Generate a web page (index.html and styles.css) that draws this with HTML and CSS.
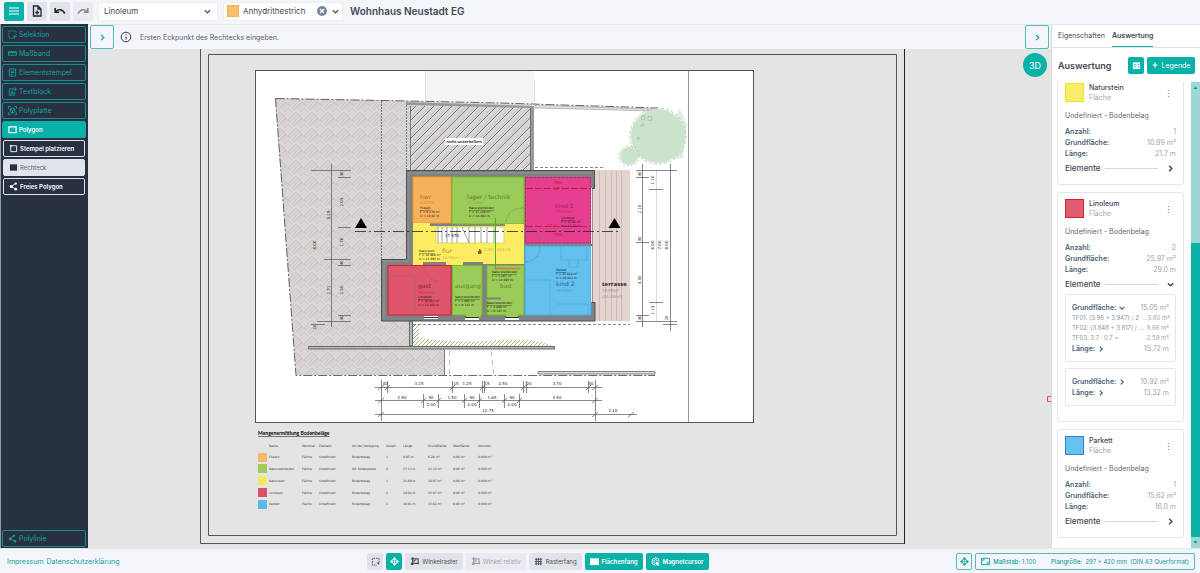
FILE: index.html
```html
<!doctype html>
<html lang="de">
    <head>
        <meta charset="utf-8">
        <meta name="viewport" content="width=device-width, initial-scale=1">
        <title>Wohnhaus Neustadt EG</title>
        <link rel="stylesheet" href="styles.css">
    </head>
    <body>
        <header class="topbar">
            <button class="tool is-primary" aria-label="Menü"><svg class="icon-lg" viewBox="0 0 12 12"><path d="M1 3h10M1 6h10M1 9h10"/></svg></button>
            <button class="tool" aria-label="Neu"><svg class="icon-lg" viewBox="0 0 12 12"><path d="M2.500 1h4.500l3 3v7h-7.500zM7 1v3h3M6.200 5.500v4M4.200 7.500h4" stroke-width="1.300"/></svg></button>
            <button class="tool" aria-label="Rückgängig"><svg class="icon-lg" viewBox="0 0 12 12"><path d="M1.200 3v4.200h4M1.500 7c2-3 7-3.500 9.300 1.500" stroke-width="1.600"/></svg></button>
            <button class="tool is-faded" aria-label="Wiederholen"><svg class="icon-lg" viewBox="0 0 12 12"><path d="M10.800 3v4.200h-4M10.500 7c-2-3-7-3.500-9.300 1.500" stroke-width="1.600"/></svg></button>
            <div class="field">
                <select aria-label="Belag"><option>Linoleum</option></select>
                <svg class="icon" viewBox="0 0 10 10"><path d="M2 3.500l3 3 3-3" stroke-width="1.400"/></svg>
            </div>
            <div class="field has-swatch">
                <span class="swatch-sm"></span>
                <select aria-label="Material"><option>Anhydrithestrich</option></select>
                <button class="clear" aria-label="Leeren"><svg viewBox="0 0 10 10"><path d="M3 3l4 4M7 3l-4 4" stroke-width="1.200"/></svg></button>
                <svg class="icon" viewBox="0 0 10 10"><path d="M2 3.500l3 3 3-3" stroke-width="1.400"/></svg>
            </div>
            <h1 class="title">Wohnhaus Neustadt EG</h1>
        </header>
        <div class="main">
            <nav class="sidebar">
                <button class="nav-item"><svg class="icon" viewBox="0 0 10 10"><path d="M9 6V1H1v8h5" stroke-dasharray="2 1"/><path class="solid" d="M6 6l4 1-2 1-1 2z"/></svg>Selektion</button>
                <button class="nav-item"><svg class="icon" viewBox="0 0 10 10"><path d="M.5 3h9v4h-9zM.5 4h9M2.500 3v2M5 3v2M7.500 3v2"/></svg>Maßband</button>
                <button class="nav-item"><svg class="icon" viewBox="0 0 10 10"><path d="M1.500 1h7v8h-7zM3 3.500h4M3 5h4M3 7h2.500"/></svg>Elementstempel</button>
                <button class="nav-item"><svg class="icon" viewBox="0 0 10 10"><path d="M6 2H1.500v7h6V5M3 4.500h3M3 6h3M3 7.500h3M8 .5v4M6 2.500h4"/></svg>Textblock</button>
                <button class="nav-item"><svg class="icon" viewBox="0 0 10 10"><path d="M.5 3V.5H3M7 .5h2.500V3M9.500 7v2.500H7M3 9.500H.5V7M5 2l2.700 1.500v3L5 8 2.300 6.500v-3zM2.300 3.500L5 5l2.700-1.500M5 5v3"/></svg>Polyplatte</button>
                <button class="nav-item is-active"><svg class="icon" viewBox="0 0 10 10"><path d="M1 2h8v6.500H1z" stroke-width="1.400"/></svg>Polygon</button>
                <button class="nav-item is-sub"><svg class="icon" viewBox="0 0 10 10"><path d="M2 2h6.500v6.500H2zM1 2h2M2 1v2"/></svg>Stempel platzieren</button>
                <button class="nav-item is-sub is-selected"><svg class="icon" viewBox="0 0 10 10"><path class="solid" d="M1 1.500h8v7H1z"/></svg>Rechteck</button>
                <button class="nav-item is-sub"><svg class="icon" viewBox="0 0 10 10"><path d="M7.500 1.500L2.500 5l5 3"/><circle class="solid" cx="2.500" cy="5" r="1.800"/><circle class="solid" cx="7.500" cy="1.800" r="1.300"/><circle class="solid" cx="7.500" cy="8" r="1.500"/></svg>Freies Polygon</button>
                <button class="nav-item is-last"><svg class="icon" viewBox="0 0 10 10"><path d="M7 1.500L2.500 5l5 3"/><circle class="solid" cx="2.500" cy="5.500" r="1.600"/><circle class="solid" cx="6.500" cy="2" r="1.200"/><circle class="solid" cx="7.800" cy="8" r="1.400"/></svg>Polylinie</button>
            </nav>
            <main class="workspace">
                <div class="hint">
                    <button class="toggle" aria-label="Werkzeuge"><svg class="icon" viewBox="0 0 10 10"><path d="M3.500 2l3 3-3 3" stroke-width="1.300"/></svg></button>
                    <svg class="info" viewBox="0 0 12 12"><circle cx="6" cy="6" r="4.800"/><path d="M6 5.500v3M6 3.200v1.100"/></svg>
                    <span>Ersten Eckpunkt des Rechtecks eingeben.</span>
                    <button class="toggle is-right" aria-label="Seitenleiste"><svg class="icon" viewBox="0 0 10 10"><path d="M3.500 2l3 3-3 3" stroke-width="1.300"/></svg></button>
                </div>
                <div class="stage">
                    <svg class="plan" viewBox="88 49 963 499" role="img" aria-label="Grundriss Erdgeschoss">
                        <defs>
                            <pattern id="paving" width="16" height="16" patternUnits="userSpaceOnUse">
                                <path d="M0 8l8-8M2 10l8-8M4 12l8-8M6 14l8-8M8 0l8 8M-2 6l4 4M0 12l4 4M10 8l6 6M8 10l6 6M12 6l4 4" stroke="#c3bebd" stroke-width=".6" fill="none"/>
                            </pattern>
                            <pattern id="diagonal" width="9" height="9" patternUnits="userSpaceOnUse">
                                <path d="M-1 10L10-1M-1 1l2-2M8 10l2-2" stroke="#555" stroke-width=".7"/>
                                <path d="M-1 7L7-1M6 10l4-4" stroke="#aaa" stroke-width=".5"/>
                            </pattern>
                            <pattern id="hedge" width="4" height="4" patternUnits="userSpaceOnUse">
                                <path d="M0 4l4-4" stroke="#9cb86c" stroke-width="1"/>
                            </pattern>
                        </defs>

                        <!-- sheet frames -->
                        <path class="frame" d="M200.500 49V543.500H904.500M208.500 54.500H896.500V535.500H208.500z"/>
                        <path d="M904.500 49V544" stroke="#222"/>
                        <rect class="sheet" x="255.500" y="70.500" width="498" height="352"/>
                        <path d="M688.500 71V422" stroke="#999"/>

                        <!-- site -->
                        <path d="M425 71H534L535 104 425 101z" fill="#f4f4f4"/>
                        <path d="M425.500 71V101M534.500 80V102" stroke="#ddd"/>
                        <g id="terrain">
                            <path d="M275 98L532 104V171H406V260H381V321H409L412 349H445V375H296z" fill="#d9d5d4"/>
                            <path d="M275 98L410 101V171H406V260H381V321H409L412 349H445V375H296z" fill="url(#paving)"/>
                            <path d="M410 106H531V171H410z" fill="url(#diagonal)"/>
                        </g>
                        <path d="M406 102L534 106V170H530V108L406 105z" fill="#999"/>
                        <path d="M530.500 108V170M410.500 106V170M444.500 350V375" stroke="#666" stroke-width=".8"/>
                        <path d="M535 105L655 109V111L535 108z" fill="#ddd" stroke="#888" stroke-width=".5"/>
                        <path d="M275.500 98.500L410 101 500 103 658 108M275.500 98.500L296 375.500H655" stroke="#444" stroke-width=".8" stroke-dasharray="9 2 2 2" fill="none"/>
                        <path d="M381.500 101V259M406.500 105V170" stroke="#777" stroke-dasharray="2 1"/>
                        <path d="M535 167.500H603M413 324.500H630" stroke="#888" stroke-dasharray="3 2"/>
                        <rect x="445" y="138" width="38" height="7" fill="#fff"/>
                        <text class="site-note" x="464" y="143">nicht unterkellert</text>
                        <path d="M412 325H419V338Q465 344 495 340 535 338 553 346H412z" fill="url(#hedge)"/>
                        <path d="M308.500 346.500H554.500V349H308.500zM409.500 321H412.500V346H409.500z" fill="#b4b8b8" stroke="#666"/>
                        <path d="M538 371.500H655V374H538z" fill="#ddd" stroke="#666" stroke-width=".8"/>
                        <path d="M449.500 351V375M491 351L494 375" stroke="#bbb" stroke-dasharray="5 4"/>

                        <!-- trees -->
                        <g fill="#cbe2cb" stroke="#a9bba9" stroke-width=".8">
                            <path d="M679 108L687 124 683 158 665 160z" stroke="none" opacity=".6"/>
                            <circle cx="658" cy="136" r="27" stroke="none"/>
                            <circle cx="658" cy="136" r="28" fill="none" stroke-dasharray="3 2"/>
                            <circle cx="629" cy="156" r="9" stroke="none"/>
                            <circle cx="629" cy="156" r="10" fill="none" stroke-dasharray="2 2"/>
                            <path d="M641 117l3-2 1 4-3 1zM648 116l4 1-1 4-3-1zM640 126l3-3 1 3zM637 137l3 1-2 2z" fill="none"/>
                        </g>

                        <!-- terrace -->
                        <path d="M592 170H630V321H592z" fill="#e4d3cf"/>
                        <path d="M599.500 171V321M605.500 171V321M611.500 171V321M616.500 171V321M621.500 171V321" stroke="#c0afab" stroke-width=".7"/>

                        <!-- walls and rooms -->
                        <path d="M406.500 170.500H594.500V188.500H592V302.500H595V321H381.500V259.500H406.500z" fill="#7f8283" stroke="#4b4e50"/>
                        <path d="M408 173H592M408 173V261H384V319" fill="none" stroke="#929596"/>
                        <path d="M413 177H451V223H413z" fill="#f5b25b" stroke="#f49a2c"/>
                        <path d="M452 177H524V224H452z" fill="#9bcb58" stroke="#79b928"/>
                        <path d="M413 223H430V226H505V224H524V264H483V262H463V265H446V262H423V265H413z" fill="#fbec61"/>
                        <path d="M436 227H504V243H436z" fill="#fff" stroke="#e2d75c"/>
                        <path d="M438 227V243M442 227V243M447 227V243M452 227V243M457 227V243M462 227L469 243M469 227V243M475 227V243M481 227V243M487 227V243M494 227V243" stroke="#888" stroke-width=".8"/>
                        <path d="M525.500 177.500H590.500V243H525.500z" fill="#e73f90" stroke="#cf1f69" stroke-dasharray="3 1"/>
                        <path d="M526 188.500H591M526 226.500H591" stroke="#b32060" stroke-dasharray="7 2"/>
                        <path d="M388 265.500H451V315H388z" fill="#df556a" stroke="#cf2034"/>
                        <path d="M452.500 265.500H482V315H481V317.500H466V315H452.500z" fill="#9bcb58" stroke="#79b928"/>
                        <path d="M487 265.500H524V315H518V317.500H506V315H487z" fill="#9bcb58" stroke="#79b928"/>
                        <path d="M486 298.500H501" stroke="#7f8283" stroke-width="2"/>
                        <path d="M495.500 218V268" stroke="#4fae20"/>
                        <path d="M494 268.500H520" stroke="#c88743" stroke-width="2"/>
                        <path d="M525 246H591V315H525z" fill="#64c1ef" stroke="#4ba7df"/>
                        <path d="M561 246V260H587V246M569 260V267H578V260M526 280H550V314M557 304H588V314" fill="none" stroke="#51a9d8" stroke-width=".7"/>
                        <path d="M526 262Q540 260 540 246M424 266Q426 278 438 282M506 222Q508 208 524 208M526 226Q538 228 540 242" fill="none" stroke="#666" stroke-width=".5" stroke-dasharray="2 1"/>
                        <path d="M424 317.500H438M465 318.500H479M505 318.500H519" stroke="#fff" stroke-width="3"/>
                        <path d="M424 317.500H438M465 317.500H479M505 317.500H519" stroke="#333"/>
                        <path d="M591.500 188V244M591.500 246V302" stroke="#eee"/>
                        <path d="M388 276H415V314M541 188V212H526" fill="none" stroke="#777" stroke-width=".4"/>
                        <path d="M355 231.500H621" stroke="#222" stroke-width=".8" stroke-dasharray="11 3 2 3"/>
                        <path d="M361 218L367 228H355zM614.500 218L620.500 228H608.500z" fill="#000"/>
                        <path d="M476 251h3v-2a3 3 0 0 1 2 5h-3v-3z" fill="#776b20"/>

                        <g class="room-name">
                            <text x="420" y="199" fill="#a66d28">hwr</text>
                            <text x="467" y="199" fill="#598526">lager / technik</text>
                            <text x="555" y="208" fill="#9b175a">kind 1</text>
                            <text x="442" y="253" fill="#a99b31">flur</text>
                            <text x="418" y="288" fill="#85202e">gast</text>
                            <text x="455" y="288" fill="#598526">ausgang</text>
                            <text x="500" y="288" fill="#598526">bad</text>
                            <text x="556" y="286" fill="#205f96">kind 2</text>
                            <text class="is-outside" x="602" y="286">terrasse</text>
                        </g>
                        <g class="room-note">
                            <text x="420" y="209" text-decoration="underline">Fliesen</text><text x="420" y="213">F = 6.279 m²</text><text x="420" y="217">U = 10.02 m</text>
                            <text x="469" y="209" text-decoration="underline">Natursteinboden</text><text x="469" y="213">F = 11.126 m²</text><text x="469" y="217">U = 14.002 m</text>
                            <text x="561" y="219" text-decoration="underline">Linoleum</text><text x="561" y="223">F = 15.02 m²</text><text x="561" y="227">U = 15.72 m</text>
                            <text x="419" y="252" text-decoration="underline">Naturstein</text><text x="419" y="256">F = 10.986 m²</text><text x="419" y="260">U = 21.695 m</text>
                            <text x="418" y="298" text-decoration="underline">Linoleum</text><text x="418" y="302">F = 10.915 m²</text><text x="418" y="306">U = 13.322 m</text>
                            <text x="455" y="298" text-decoration="underline">Natursteinboden</text><text x="455" y="302">F = 5.060 m²</text><text x="455" y="306">U = 9.322 m</text>
                            <text x="492" y="273" text-decoration="underline">Natursteinboden</text><text x="492" y="277">F = 5.267 m²</text><text x="492" y="281">U = 10.090 m</text>
                            <text x="487" y="304" text-decoration="underline">Natursteinboden</text><text x="487" y="308">F = 2.480 m²</text><text x="487" y="312">U = 6.167 m</text>
                            <text x="556" y="271" text-decoration="underline">Parkett</text><text x="556" y="275">F = 15.624 m²</text><text x="556" y="279">U = 16.012 m</text>
                        </g>
                        <g class="room-area">
                            <text x="420" y="204" fill="#c88f43">6.27m²</text>
                            <text x="467" y="204" fill="#84ae49">11.12m²</text>
                            <text x="556" y="213" fill="#c02674">15.02m²</text>
                            <text x="442" y="259" fill="#c9bb48">10.98m²</text>
                            <text x="484" y="251" fill="#c9bb48">2.90 | 524.08</text>
                            <text x="418" y="294" fill="#b43548">10.91m²</text>
                            <text x="556" y="292" fill="#4798c9">15.60m²</text>
                            <text x="602" y="292" fill="#9c8f8c">19.95m²</text>
                            <text x="602" y="298" fill="#9c8f8c">(10.00m²)</text>
                            <text x="445" y="237" fill="#222">17 STG</text>
                            <text x="554" y="184" fill="#d3102e">TRH</text><text x="554" y="190" fill="#d3102e">UZ 1</text><text x="547" y="227" fill="#d3102e">UZ 2</text><text x="554" y="236" fill="#d3102e">TRH</text>
                        </g>

                        <!-- dimension chains -->
                        <path class="dim" d="M331.500 164V327M311 170.500H351M338 177.500H351M338 227.500H351M324 259.500H351M338 265.500H351M338 315.500H351M317 321.500H351M311 324.500H325M642.500 164V327M636 170.500H677M636 177.500H649M636 242.500H649M636 315.500H649M636 321.500H677M649 189.500H663M649 302.500H663M670.500 164V331M663 324.500H677"/>
                        <path class="dim" d="M656.500 170V321" opacity=".3"/>
                        <path class="dim" d="M375 387.500H602M375 400.500H602M375 414.500H637M381.500 380V421M387.500 381V393M452.500 381V393M482.500 381V393M484.500 381V393M523.500 381V393M526.500 381V393M588.500 381V393M595.500 380V421M423.500 394V408M438.500 394V408M464.500 394V408M479.500 394V408M504.500 394V408M519.500 394V408"/>
                        <path class="dim" d="M378 390l6-5M385 390l5-5M450 390l5-5M480 390l5-5M521 390l5-5M586 390l5-5M592 390l6-5M378 403l6-5M421 403l5-5M436 403l5-5M462 403l5-5M477 403l5-5M502 403l5-5M517 403l5-5M592 403l6-5M378 417l6-5M592 417l6-5M628 417l6-5"/>
                        <g class="dim-text">
                            <text x="385" y="385">40</text><text x="419" y="385">3.15</text><text x="456" y="385">15</text><text x="467" y="385">1.25</text><text x="487" y="385">15</text><text x="503" y="385">2.50</text><text x="529" y="385">20</text><text x="557" y="385">3.70</text><text x="591" y="385">40</text>
                            <text x="402" y="399">2.50</text><text x="431" y="399">90</text><text x="452" y="399">1.50</text><text x="472" y="399">90</text><text x="492" y="399">1.65</text><text x="512" y="399">90</text><text x="557" y="399">4.50</text>
                            <text x="431" y="406">2.00</text><text x="472" y="406">2.00</text><text x="512" y="406">2.00</text>
                            <text x="488" y="412">12.75</text><text x="613" y="412">2.10</text>
                            <text transform="translate(330 215) rotate(-90)">5.29</text><text transform="translate(343 202) rotate(-90)">2.05</text><text transform="translate(343 174) rotate(-90)">40</text><text transform="translate(343 242) rotate(-90)">1.76</text><text transform="translate(316 245) rotate(-90)">8.00</text><text transform="translate(343 263) rotate(-90)">40</text><text transform="translate(330 290) rotate(-90)">2.71</text><text transform="translate(343 290) rotate(-90)">2.50</text><text transform="translate(343 318) rotate(-90)">40</text><text transform="translate(316 327) rotate(-90)">20</text>
                            <text transform="translate(641 174) rotate(-90)">40</text><text transform="translate(641 209) rotate(-90)">2.10</text><text transform="translate(641 239) rotate(-90)">30</text><text transform="translate(641 280) rotate(-90)">4.30</text><text transform="translate(641 318) rotate(-90)">40</text><text transform="translate(654 180) rotate(-90)">1.10</text><text transform="translate(654 310) rotate(-90)">1.15</text><text transform="translate(654 245) rotate(-90)">6.00</text><text transform="translate(661 245) rotate(-90)">7.00</text><text transform="translate(668 245) rotate(-90)">8.00</text><text transform="translate(668 318) rotate(-90)">20</text>
                        </g>

                        <!-- quantities legend -->
                        <text x="258" y="435" class="legend-title">Mengenermittlung Bodenbeläge</text>
                        <g class="legend">
                            <text x="269" y="447">Name</text><text x="302" y="447">Merkmal</text><text x="319" y="447">Element</text><text x="352" y="447">Art der Verlegung</text><text x="386" y="447">Anzahl</text><text x="403" y="447">Länge</text><text x="428" y="447">Grundfläche</text><text x="453" y="447">Oberfläche</text><text x="478" y="447">Volumen</text>
                            <rect x="258" y="453" width="9" height="9" fill="#f3bb65"/><text x="269" y="458">Fliesen</text><text x="302" y="458">Fläche</text><text x="319" y="458">Undefiniert</text><text x="352" y="458">Bodenbelag</text><text x="386" y="458">1</text><text x="403" y="458">9.95 m</text><text x="428" y="458">6.28 m²</text><text x="453" y="458">0.00 m²</text><text x="478" y="458">0.000 m³</text>
                            <rect x="258" y="464" width="9" height="9" fill="#a2ca61"/><text x="269" y="470">Natursteinboden</text><text x="302" y="470">Fläche</text><text x="319" y="470">Undefiniert</text><text x="352" y="470">OG Bodenplatte</text><text x="386" y="470">4</text><text x="403" y="470">27.13 m</text><text x="428" y="470">21.25 m²</text><text x="453" y="470">0.00 m²</text><text x="478" y="470">0.000 m³</text>
                            <rect x="258" y="476" width="9" height="9" fill="#f3e85f"/><text x="269" y="482">Naturstein</text><text x="302" y="482">Fläche</text><text x="319" y="482">Undefiniert</text><text x="352" y="482">Bodenbelag</text><text x="386" y="482">1</text><text x="403" y="482">21.69 m</text><text x="428" y="482">10.97 m²</text><text x="453" y="482">0.00 m²</text><text x="478" y="482">0.000 m³</text>
                            <rect x="258" y="488" width="9" height="9" fill="#d95165"/><text x="269" y="494">Linoleum</text><text x="302" y="494">Fläche</text><text x="319" y="494">Undefiniert</text><text x="352" y="494">Bodenbelag</text><text x="386" y="494">2</text><text x="403" y="494">29.04 m</text><text x="428" y="494">25.97 m²</text><text x="453" y="494">0.00 m²</text><text x="478" y="494">0.000 m³</text>
                            <rect x="258" y="500" width="9" height="9" fill="#5ab9e9"/><text x="269" y="505">Parkett</text><text x="302" y="505">Fläche</text><text x="319" y="505">Undefiniert</text><text x="352" y="505">Bodenbelag</text><text x="386" y="505">1</text><text x="403" y="505">16.01 m</text><text x="428" y="505">15.62 m²</text><text x="453" y="505">0.00 m²</text><text x="478" y="505">0.000 m³</text>
                        </g>
                        <path d="M1052 396.500H1047.500V401.500H1052" fill="none" stroke="#d95060"/>
                    </svg>
                    <button class="view-3d">3D</button>
                </div>
            </main>
            <aside class="panel">
                <div class="tabs">
                    <button class="tab">Eigenschaften</button>
                    <button class="tab is-active">Auswertung</button>
                </div>
                <div class="panel-head">
                    <h2>Auswertung</h2>
                    <button class="button is-square" aria-label="Tabelle"><svg class="icon" viewBox="0 0 10 10"><path class="solid" d="M1 1.500h8v7.500H1z"/><path d="M2.500 4h2M6 4h2M2.500 6.500h2M6 6.500h2" stroke="#0ab1a8"/></svg></button>
                    <button class="button"><svg class="icon-sm" viewBox="0 0 10 10"><path d="M5 1v8M1 5h8" stroke-width="2"/></svg>Legende</button>
                </div>
                <div class="scroller">
                    <div class="cards">
                        <article class="card">
                            <div class="card-head">
                                <span class="swatch is-yellow"></span>
                                <div class="card-name"><h3>Naturstein</h3><p>Fläche</p></div>
                                <button class="more" aria-label="Mehr">⋮</button>
                            </div>
                            <p class="kind">Undefiniert - Bodenbelag</p>
                            <dl>
                                <div><dt>Anzahl:</dt><dd>1</dd></div>
                                <div><dt>Grundfläche:</dt><dd>10.99 m²</dd></div>
                                <div><dt>Länge:</dt><dd>21.7 m</dd></div>
                            </dl>
                            <button class="elements">Elemente<span class="rule"></span><svg class="icon" viewBox="0 0 10 10"><path d="M3.500 2l3 3-3 3" stroke-width="1.600"/></svg></button>
                        </article>
                        <article class="card">
                            <div class="card-head">
                                <span class="swatch is-red"></span>
                                <div class="card-name"><h3>Linoleum</h3><p>Fläche</p></div>
                                <button class="more" aria-label="Mehr">⋮</button>
                            </div>
                            <p class="kind">Undefiniert - Bodenbelag</p>
                            <dl>
                                <div><dt>Anzahl:</dt><dd>2</dd></div>
                                <div><dt>Grundfläche:</dt><dd>25.97 m²</dd></div>
                                <div><dt>Länge:</dt><dd>29.0 m</dd></div>
                            </dl>
                            <button class="elements">Elemente<span class="rule"></span><svg class="icon" viewBox="0 0 10 10"><path d="M2 3.500l3 3 3-3" stroke-width="1.600"/></svg></button>
                            <dl class="element">
                                <div><dt>Grundfläche: <svg class="icon-sm" viewBox="0 0 10 10"><path d="M1 3l4 4 4-4" stroke-width="2"/></svg></dt><dd>15.05 m²</dd></div>
                                <div class="part"><dt>TF01: (3.96 + 3.947) / 2 ·...</dt><dd>3.80 m²</dd></div>
                                <div class="part"><dt>TF02: (3.848 + 3.817) / ...</dt><dd>8.66 m²</dd></div>
                                <div class="part"><dt>TF03: 3.7 · 0.7 =</dt><dd>2.59 m²</dd></div>
                                <div><dt>Länge: <svg class="icon-sm" viewBox="0 0 10 10"><path d="M3 1l4 4-4 4" stroke-width="2"/></svg></dt><dd>15.72 m</dd></div>
                            </dl>
                            <dl class="element">
                                <div><dt>Grundfläche: <svg class="icon-sm" viewBox="0 0 10 10"><path d="M3 1l4 4-4 4" stroke-width="2"/></svg></dt><dd>10.92 m²</dd></div>
                                <div><dt>Länge: <svg class="icon-sm" viewBox="0 0 10 10"><path d="M3 1l4 4-4 4" stroke-width="2"/></svg></dt><dd>13.32 m</dd></div>
                            </dl>
                        </article>
                        <article class="card">
                            <div class="card-head">
                                <span class="swatch is-blue"></span>
                                <div class="card-name"><h3>Parkett</h3><p>Fläche</p></div>
                                <button class="more" aria-label="Mehr">⋮</button>
                            </div>
                            <p class="kind">Undefiniert - Bodenbelag</p>
                            <dl>
                                <div><dt>Anzahl:</dt><dd>1</dd></div>
                                <div><dt>Grundfläche:</dt><dd>15.62 m²</dd></div>
                                <div><dt>Länge:</dt><dd>16.0 m</dd></div>
                            </dl>
                            <button class="elements">Elemente<span class="rule"></span><svg class="icon" viewBox="0 0 10 10"><path d="M3.500 2l3 3-3 3" stroke-width="1.600"/></svg></button>
                        </article>
                    </div>
                    <div class="scrollbar">
                        <svg viewBox="0 0 9 11"><path d="M2.500 7h4l-2-2.500z"/></svg>
                        <div class="thumb"></div>
                        <svg viewBox="0 0 9 11"><path d="M2.500 4h4l-2 2.500z"/></svg>
                    </div>
                </div>
            </aside>
        </div>
        <footer class="footer">
            <div class="links"><a href="#">Impressum</a><a href="#">Datenschutzerklärung</a></div>
            <div class="snaps">
                <button class="snap is-square" aria-label="Auswahl"><svg class="icon" viewBox="0 0 10 10"><path d="M9 6V1.500H1.500v7.500h5" stroke-dasharray="2 1"/><path class="solid" d="M6 6h3v3z"/></svg></button>
                <button class="snap is-square is-on" aria-label="Verschieben"><svg class="icon" viewBox="0 0 10 10"><path class="solid" d="M5 0l2.500 3h-5zM5 10l2.500-3h-5zM0 5l3-2.500v5zM10 5L7 2.500v5zM4 4h2v2H4z"/></svg></button>
                <button class="snap"><svg class="icon" viewBox="0 0 10 10"><path d="M3 0v7h7M1 2h8v6" stroke-width="1.300"/><path class="solid" d="M4 3h3L4 6zM1 6h3v3H1z"/></svg>Winkelraster</button>
                <button class="snap is-faded"><svg class="icon" viewBox="0 0 10 10"><path d="M3 0v7h7M1 2h8v6" stroke-width="1.300"/><path class="solid" d="M4 3h3L4 6zM1 6h3v3H1z"/></svg>Winkel relativ</button>
                <button class="snap"><svg class="icon" viewBox="0 0 10 10"><path d="M2.500 1v8M5 1v8M7.500 1v8M1 2.500h8M1 5h8M1 7.500h8"/></svg>Rasterfang</button>
                <button class="snap is-on"><svg class="icon" viewBox="0 0 10 10"><path class="solid" d="M0 1.500h10v7.500H0z"/></svg>Flächenfang</button>
                <button class="snap is-on"><svg class="icon" viewBox="0 0 10 10"><path d="M5 9A4 4 0 1 1 9 5M5 7A2 2 0 1 1 7 5"/><path class="solid" d="M5 5l5 2-2 .8L9.500 9.500l-.8.500L7.500 8.500 6.500 10z"/></svg>Magnetcursor</button>
            </div>
            <div class="status">
                <button class="snap is-square is-outline" aria-label="Zentrieren"><svg class="icon" viewBox="0 0 10 10"><path class="solid" d="M5 0l2.500 3h-5zM5 10l2.500-3h-5zM0 5l3-2.500v5zM10 5L7 2.500v5z"/><path d="M5 3v4M3 5h4" stroke-width=".6"/></svg></button>
                <div class="scale">
                    <svg class="icon" viewBox="0 0 10 10"><path d="M.5 1.500h9v7h-9zM2 5V3h2M8 5v2H6"/></svg>
                    <span><b>Maßstab:</b> 1:100</span>
                    <span class="size"><b>Plangröße:</b>&nbsp; 297 x 420 mm &nbsp;(DIN A3 Querformat)</span>
                </div>
            </div>
        </footer>
    </body>
</html>
```
FILE: styles.css
```css
* {
    box-sizing: border-box;
}
html {
    font-size: 7px;
    font-family: Inter, "Liberation Sans", sans-serif;
}
body {
    display: flex;
    flex-direction: column;
    height: 100vh;
    margin: 0;
    color: #3f4854;
    background-color: #f4f5fa;
}
h1, h2, h3, p, dl, dd {
    margin: 0;
}
button, select {
    font: inherit;
    color: inherit;
    border: 0;
    padding: 0;
    margin: 0;
    background: none;
}
svg {
    display: block;
    flex-shrink: 0;
}
.icon, .icon-lg, .icon-sm, .info, .clear svg {
    fill: none;
    stroke: currentColor;
}
.icon .solid {
    fill: currentColor;
    stroke: none;
}
.icon {
    width: 9px;
    height: 9px;
}
.icon-lg {
    width: 12px;
    height: 12px;
}
.icon-sm {
    width: 6px;
    height: 6px;
}

/* top bar */
.topbar {
    display: flex;
    align-items: center;
    gap: 3px;
    height: 24px;
    padding: 0 4px 2px;
}
.tool {
    display: flex;
    align-items: center;
    justify-content: center;
    width: 20px;
    height: 19px;
    border-radius: 2px;
    color: #1f2733;
    background-color: #e1e3e9;
}
.tool.is-primary {
    color: #fff;
    background-color: #0ab1a8;
}
.tool.is-faded {
    opacity: 0.5;
}
.field {
    display: flex;
    align-items: center;
    gap: 4px;
    width: 120px;
    height: 19px;
    margin-left: 2px;
    padding: 0 5px;
    border: 1px solid #eceef3;
    border-radius: 2px;
    background-color: #fff;
}
.has-swatch {
    padding: 0 2px 0 3px;
}
.field select {
    flex: 1;
    min-width: 0;
    appearance: none;
    font-size: 8px;
}
.swatch-sm {
    width: 12px;
    height: 12px;
    border: 1px dashed #f4ad45;
    background-color: #f8c06b;
}
.clear svg {
    width: 10px;
    height: 10px;
    border-radius: 50%;
    color: #fff;
    background-color: #76889c;
}
.title {
    margin-left: 4px;
    font-size: 10px;
    font-weight: 600;
}

.main {
    display: flex;
    flex: 1;
    min-height: 0;
}

/* tools */
.sidebar {
    display: flex;
    flex-direction: column;
    gap: 2px;
    width: 88px;
    padding: 2px 2px 1px 1px;
    border-left: 1px solid #8c9db0;
    background-color: #273142;
}
.nav-item {
    display: flex;
    align-items: center;
    gap: 2px;
    height: 17px;
    padding-left: 5px;
    border: 1px solid #168f8e;
    border-radius: 2px;
    color: #12a39d;
    white-space: nowrap;
}
.nav-item.is-active {
    color: #fff;
    border-color: #0ab1a8;
    background-color: #0ab1a8;
    font-size: 6px;
    font-weight: 600;
}
.nav-item.is-sub {
    margin: 0 1px;
    border-color: #dfe2e8;
    color: #fff;
    font-size: 6px;
    font-weight: 600;
}
.nav-item.is-selected {
    color: #5d6672;
    background-color: #e1e4ea;
    font-weight: normal;
}
.is-selected .icon {
    color: #273142;
}
.nav-item.is-last {
    margin-top: auto;
}

/* drawing area */
.workspace {
    display: flex;
    flex-direction: column;
    flex: 1;
    min-width: 0;
}
.hint {
    display: flex;
    align-items: center;
    height: 25px;
    padding: 0 2px;
    border-top: 1px solid #e5e7ec;
    color: #59606b;
}
.toggle {
    display: flex;
    align-items: center;
    justify-content: center;
    width: 24px;
    height: 24px;
    border: 1px solid #4dbdb8;
    border-radius: 2px;
    color: #12a39d;
}
.toggle.is-right {
    margin-left: auto;
}
.info {
    width: 12px;
    height: 12px;
    margin: 0 8px 0 6px;
    color: #333b47;
}
.stage {
    position: relative;
    flex: 1;
    min-height: 0;
    background-color: #e4e4e4;
}
.plan {
    width: 100%;
    height: 100%;
}
.view-3d {
    position: absolute;
    top: 4px;
    right: 4px;
    width: 24px;
    height: 24px;
    border-radius: 50%;
    color: #fff;
    background-color: #0ab1a8;
    font-size: 9px;
}
.frame {
    fill: none;
    stroke: #555;
}
.sheet {
    fill: #fff;
    stroke: #555;
}
.room-name {
    font: 6px "DejaVu Sans", sans-serif;
}
.room-name .is-outside {
    font: bold 6px "Open Sans", sans-serif;
    fill: #222;
}
.room-area {
    font: 4px "DejaVu Sans", sans-serif;
}
.room-note {
    font: 3px "DejaVu Sans", sans-serif;
    fill: #111;
}
.site-note {
    font: bold 4px "Open Sans", sans-serif;
    text-anchor: middle;
    fill: #333;
}
.dim {
    fill: none;
    stroke: #555;
    stroke-width: 0.7;
}
.dim-text {
    font: 4px "DejaVu Sans", sans-serif;
    text-anchor: middle;
    fill: #222;
}
.legend-title {
    font: bold 5px Lato, sans-serif;
    text-decoration: underline;
}
.legend {
    font: 3px "DejaVu Sans", sans-serif;
    fill: #333;
}

/* evaluation panel */
.panel {
    display: flex;
    flex-direction: column;
    width: 149px;
    border-left: 1px solid #d5d9e0;
    background-color: #fff;
}
.tabs {
    display: flex;
    gap: 7px;
    height: 24px;
    padding-left: 6px;
    border-top: 1px solid #e5e7ec;
    border-bottom: 1px solid #dfe2e8;
}
.tab {
    border-bottom: 1px solid transparent;
}
.tab.is-active {
    border-color: #0ab1a8;
    font-weight: 600;
}
.panel-head {
    display: flex;
    align-items: center;
    gap: 3px;
    height: 34px;
    padding: 0 5px 0 6px;
}
.panel-head h2 {
    flex: 1;
    font-size: 9px;
    font-weight: 600;
}
.button {
    display: flex;
    align-items: center;
    justify-content: center;
    gap: 4px;
    width: 48px;
    height: 17px;
    border-radius: 2px;
    color: #fff;
    background-color: #0ab1a8;
}
.button.is-square {
    width: 16px;
}
.scroller {
    display: flex;
    flex: 1;
    min-height: 0;
    overflow: hidden;
}
.cards {
    flex: 1;
    min-width: 0;
    margin-top: -6px;
    padding: 0 7px 0 5px;
}
.card {
    margin-bottom: 7px;
    padding: 6px 7px 9px;
    border: 1px solid #e3e5ea;
    border-radius: 3px;
}
.card-head {
    display: flex;
    gap: 5px;
}
.swatch {
    width: 19px;
    height: 19px;
    border: 1px solid;
}
.swatch.is-yellow {
    border-color: #f3e11c;
    background-color: #f8ec6d;
}
.swatch.is-red {
    border-color: #d02333;
    background-color: #e05c6e;
}
.swatch.is-blue {
    border-color: #3f82c8;
    background-color: #66c2f0;
}
.card-name {
    flex: 1;
    line-height: 10px;
    color: #a0a4ab;
}
.card-name h3 {
    font-size: 7px;
    font-weight: 500;
    color: #3f4854;
}
.more {
    width: 16px;
    font-size: 9px;
    color: #6a717c;
}
.kind {
    margin: 7px 0 4px;
    line-height: 12px;
    color: #5f6673;
}
dl div {
    display: flex;
    justify-content: space-between;
    line-height: 11px;
    white-space: nowrap;
}
dt {
    display: flex;
    align-items: center;
    gap: 3px;
    color: #4c5d73;
    font-weight: 600;
}
dd {
    color: #a0a4ab;
}
.elements {
    display: flex;
    align-items: center;
    gap: 4px;
    width: 100%;
    margin-top: 3px;
    padding-right: 1px;
    font-size: 8px;
    font-weight: 500;
    line-height: 13px;
}
.rule {
    flex: 1;
    height: 1px;
    margin-right: 4px;
    background-color: #d5d8dd;
}
.element {
    margin: 3px 0 6px;
    padding: 7px 6px;
    border: 1px solid #e3e5ea;
    border-radius: 2px;
}
.element .part {
    font-size: 6px;
    line-height: 10px;
}
.part dt {
    color: #8d939c;
    font-weight: normal;
}
.scrollbar {
    display: flex;
    flex-direction: column;
    width: 9px;
    background-color: #9dd6d6;
}
.scrollbar svg {
    width: 9px;
    height: 11px;
    fill: #0a938e;
}
.thumb {
    height: 63%;
    margin-top: auto;
    background-color: #0ab1a8;
}

/* footer */
.footer {
    display: flex;
    align-items: center;
    justify-content: space-between;
    height: 25px;
    padding: 0 5px 0 7px;
    border-top: 1px solid #e5e7ec;
    color: #12a39d;
}
.links {
    display: flex;
    gap: 3px;
}
.links a {
    color: inherit;
    text-decoration: none;
}
.snaps, .status {
    display: flex;
    gap: 3px;
    font-size: 6px;
    white-space: nowrap;
}
.snap {
    display: flex;
    align-items: center;
    justify-content: center;
    gap: 3px;
    height: 17px;
    padding: 0 5px;
    border-radius: 2px;
    color: #4a525e;
    background-color: #e1e3e9;
}
.snap.is-square {
    width: 16px;
    padding: 0;
}
.snap.is-faded {
    opacity: 0.5;
}
.snap.is-on {
    color: #fff;
    background-color: #0ab1a8;
    font-weight: 600;
}
.snap.is-outline, .scale {
    border: 1px solid #4dbdb8;
    color: #12a39d;
    background: none;
}
.scale {
    display: flex;
    align-items: center;
    gap: 3px;
    height: 17px;
    padding: 0 5px;
    border-radius: 2px;
}
.scale b {
    font-weight: 500;
}
.size {
    margin-left: 12px;
}
```
